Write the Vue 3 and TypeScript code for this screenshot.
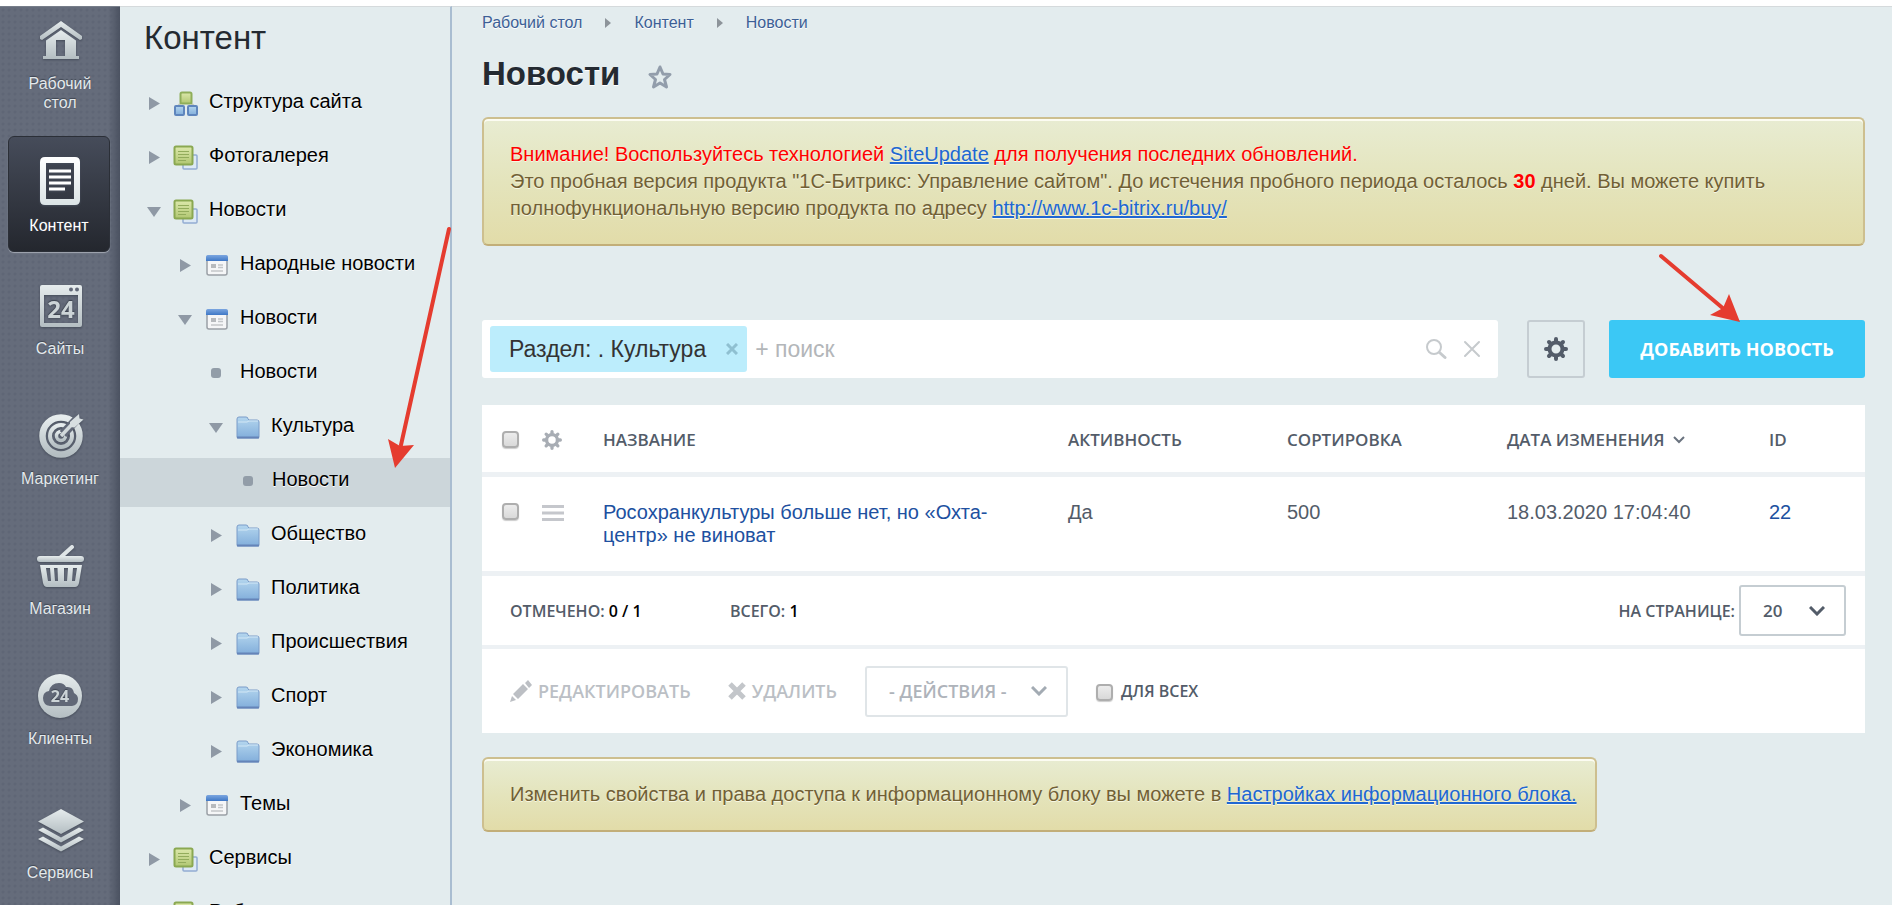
<script setup lang="ts">
import { ref } from 'vue'

type MenuIcon = 'home' | 'content' | 'sites' | 'marketing' | 'shop' | 'clients' | 'services'
interface MenuItem { icon: MenuIcon; label: string; active?: boolean }
type TreeIcon = 'structure' | 'block' | 'page' | 'folder' | 'dot'
interface TreeItem { label: string; level: number; icon: TreeIcon; open?: boolean; selected?: boolean }

const menu: MenuItem[] = [
  { icon: 'home', label: 'Рабочий стол' },
  { icon: 'content', label: 'Контент', active: true },
  { icon: 'sites', label: 'Сайты' },
  { icon: 'marketing', label: 'Маркетинг' },
  { icon: 'shop', label: 'Магазин' },
  { icon: 'clients', label: 'Клиенты' },
  { icon: 'services', label: 'Сервисы' },
]

const tree: TreeItem[] = [
  { label: 'Структура сайта', level: 0, icon: 'structure' },
  { label: 'Фотогалерея', level: 0, icon: 'block' },
  { label: 'Новости', level: 0, icon: 'block', open: true },
  { label: 'Народные новости', level: 1, icon: 'page' },
  { label: 'Новости', level: 1, icon: 'page', open: true },
  { label: 'Новости', level: 2, icon: 'dot' },
  { label: 'Культура', level: 2, icon: 'folder', open: true },
  { label: 'Новости', level: 3, icon: 'dot', selected: true },
  { label: 'Общество', level: 2, icon: 'folder' },
  { label: 'Политика', level: 2, icon: 'folder' },
  { label: 'Происшествия', level: 2, icon: 'folder' },
  { label: 'Спорт', level: 2, icon: 'folder' },
  { label: 'Экономика', level: 2, icon: 'folder' },
  { label: 'Темы', level: 1, icon: 'page' },
  { label: 'Сервисы', level: 0, icon: 'block' },
  { label: 'Работа', level: 0, icon: 'block' },
]

const crumbs = ['Рабочий стол', 'Контент', 'Новости']
const search = ref('')
const perPage = ref('20')
const action = ref('')
</script>

<template>
  <div class="page">
    <svg class="defs" width="0" height="0" aria-hidden="true">
      <defs>
        <linearGradient id="metal" x1="0" y1="0" x2="0" y2="1">
          <stop offset="0" stop-color="#e6eced" />
          <stop offset="1" stop-color="#b4bec2" />
        </linearGradient>
        <linearGradient id="white" x1="0" y1="0" x2="0" y2="1">
          <stop offset="0" stop-color="#ffffff" />
          <stop offset="1" stop-color="#dbe3e5" />
        </linearGradient>
        <linearGradient id="green" x1="0" y1="0" x2="0" y2="1">
          <stop offset="0" stop-color="#dce8ab" />
          <stop offset="1" stop-color="#b1c772" />
        </linearGradient>
        <linearGradient id="blue" x1="0" y1="0" x2="0" y2="1">
          <stop offset="0" stop-color="#b4d6ee" />
          <stop offset="1" stop-color="#82aedb" />
        </linearGradient>
        <linearGradient id="bluebar" x1="0" y1="0" x2="0" y2="1">
          <stop offset="0" stop-color="#7ba6e0" />
          <stop offset="1" stop-color="#3f78c6" />
        </linearGradient>
      </defs>
    </svg>

    <nav class="menu" aria-label="Разделы">
      <a v-for="m in menu" :key="m.icon" href="#" class="menu-item" :class="[{ active: m.active }, m.icon]">
        <svg v-if="m.icon === 'home'" class="menu-icon" viewBox="0 0 48 50">
          <path d="M25 5 4 20v3l2 1 19-13 19 13 2-1v-3z" fill="url(#metal)" />
          <path d="M25 14 10 24.500V40H7v3h36v-3h-3V24.500zM20 24h9v16h-9z" fill="url(#metal)" fill-rule="evenodd" />
        </svg>
        <svg v-else-if="m.icon === 'content'" class="menu-icon" viewBox="0 0 48 50">
          <path d="M10 1h30q5 0 5 5v38q0 5-5 5H10q-5 0-5-5V6q0-5 5-5zm1 6v36h28V7z" fill="url(#white)" fill-rule="evenodd" />
          <path d="M14 15h22M14 21h22M14 27h22M14 33h16" stroke="#fff" stroke-width="3" />
        </svg>
        <svg v-else-if="m.icon === 'sites'" class="menu-icon" viewBox="0 0 48 50">
          <path d="M6 4h38q2 0 2 2v38q0 2-2 2H6q-2 0-2-2V6q0-2 2-2zm2 10v28h34V14z" fill="url(#metal)" fill-rule="evenodd" />
          <circle cx="35" cy="8.500" r="2" fill="#616877" /><circle cx="41" cy="8.500" r="2" fill="#616877" />
          <text class="badge" x="25" y="37" text-anchor="middle" font-size="24" fill="#ccd4d7">24</text>
        </svg>
        <svg v-else-if="m.icon === 'marketing'" class="menu-icon" viewBox="0 0 48 50">
          <circle cx="25" cy="25" r="18.500" fill="none" stroke="url(#metal)" stroke-width="6.500" />
          <circle cx="25" cy="25" r="11" fill="none" stroke="url(#metal)" stroke-width="4" />
          <circle cx="25" cy="25" r="4.500" fill="none" stroke="url(#metal)" stroke-width="3.500" />
          <path d="m27 23 16-17" stroke="#616877" stroke-width="9" />
          <path d="m25 25 14-15" stroke="#d2d9db" stroke-width="3.500" />
          <path d="m34 11 9-8 .500 4.500 4 1-9 8-4.500-.500z" fill="#d8dfe1" />
        </svg>
        <svg v-else-if="m.icon === 'shop'" class="menu-icon" viewBox="0 0 48 50">
          <path d="m25 16 11-10" stroke="#dfe5e7" stroke-width="4" stroke-linecap="round" />
          <rect x="1" y="15" width="47" height="6" rx="3" fill="url(#metal)" />
          <path d="M4 24h42l-3 18q-1 4-4 4H11q-3 0-4-4zM10 27l2 13h3l-1-13zM18 27l1 13h3l-.500-13zM28 27v13h3l1-13zM37 27l-1 13h3l2-13z" fill="url(#metal)" fill-rule="evenodd" />
        </svg>
        <svg v-else-if="m.icon === 'clients'" class="menu-icon" viewBox="0 0 48 50">
          <circle cx="24" cy="25" r="22" fill="url(#metal)" />
          <path d="M14 35q-7-1-7-8 0-6 6-7 2-8 10-8 5 0 7 4 7-1 8 6 4 2 4 6 0 6-6 7z" fill="#616877" />
          <text class="badge" x="24" y="31" text-anchor="middle" font-size="16" fill="#ccd4d7">24</text>
        </svg>
        <svg v-else class="menu-icon" viewBox="0 0 48 50">
          <path d="m25 4 23 12.500L25 29 2 16.500z" fill="url(#metal)" />
          <path d="m2 25 5-2.500 18 10 18-10 5 2.500-23 12.500z" fill="url(#metal)" />
          <path d="m2 34 5-2.500 18 10 18-10 5 2.500-23 12.500z" fill="url(#metal)" />
        </svg>
        <span class="menu-label">{{ m.label }}</span>
      </a>
    </nav>

    <aside class="sidebar">
      <h2 class="side-title">Контент</h2>
      <ul class="tree">
        <li v-for="(t, i) in tree" :key="i" class="tree-row" :class="['level-' + t.level, { selected: t.selected }]">
          <button v-if="t.icon !== 'dot'" type="button" class="toggle" :aria-label="t.open ? 'Свернуть' : 'Развернуть'">
            <svg viewBox="0 0 14 14" width="14" height="14">
              <path v-if="t.open" d="M0 2h14L7 12z" fill="#8f99a5" />
              <path v-else d="M2 0v13l11-6.500z" fill="#8f99a5" />
            </svg>
          </button>
          <span v-else class="dot"></span>
          <svg v-if="t.icon === 'structure'" class="tree-icon" viewBox="0 0 26 26">
            <path d="M9 11 5 15M17 11l4 4" stroke="#c3c9b8" stroke-width="2" />
            <rect x="7.500" y="1.500" width="11" height="11" rx="1.500" fill="url(#green)" stroke="#8fae5a" stroke-width="2" />
            <rect x="2" y="15" width="9" height="9" rx="1" fill="url(#blue)" stroke="#5f86bd" stroke-width="2" />
            <rect x="15" y="15" width="9" height="9" rx="1" fill="url(#blue)" stroke="#5f86bd" stroke-width="2" />
          </svg>
          <svg v-else-if="t.icon === 'block'" class="tree-icon" viewBox="0 0 26 26">
            <rect x="10" y="10" width="14" height="14" rx="1" fill="#dce9f5" stroke="#93acd2" stroke-width="1.500" />
            <rect x="1.500" y="1.500" width="18" height="18" rx="1.500" fill="url(#green)" stroke="#8aa851" stroke-width="2" />
            <path d="M5 6.500h11M5 9.500h11M5 12.500h11M5 15.500h8" stroke="#93ac5c" />
          </svg>
          <svg v-else-if="t.icon === 'page'" class="tree-icon" viewBox="0 0 26 26">
            <rect x="3" y="3" width="20" height="19" rx="2" fill="#f5f6f7" stroke="#9ba0a6" stroke-width="1.500" />
            <path d="M2 8V4q0-2 2-2h18q2 0 2 2v4z" fill="url(#bluebar)" />
            <path d="M7 11h5v4H7z" fill="#b7babd" /><path d="M14 12h5M14 14.500h5M7 18h12" stroke="#c3c6c9" stroke-width="1.500" />
          </svg>
          <svg v-else-if="t.icon === 'folder'" class="tree-icon" viewBox="0 0 26 26">
            <path d="M2 22V4q0-2 2-2h7q2 0 2 2l1 1h8q2 0 2 2v15q0 1-1 1H3q-1 0-1-1z" fill="url(#blue)" stroke="#7b9cc9" />
            <path d="M3 7h9l2-1h9" fill="none" stroke="#d3e8f6" /><path d="M2 22.500h22" stroke="#6584b8" stroke-width="2" />
          </svg>
          <a href="#" class="tree-label">{{ t.label }}</a>
        </li>
      </ul>
    </aside>

    <main class="main">
      <nav class="crumbs" aria-label="Навигация">
        <template v-for="(c, i) in crumbs" :key="c">
          <span v-if="i" class="crumb-sep"></span>
          <a href="#">{{ c }}</a>
        </template>
      </nav>
      <div class="heading">
        <h1>Новости</h1>
        <button type="button" class="star" aria-label="В избранное">
          <svg viewBox="0 0 26 26" width="26" height="26"><path d="m13 3 3 7 7 .500-5.500 5 2 7.500L13 19l-6.500 4 2-7.500-5.500-5 7-.500z" fill="none" stroke="#929dab" stroke-width="3" stroke-linejoin="round" /></svg>
        </button>
      </div>

      <section class="notice">
        <p class="alert">Внимание! Воспользуйтесь технологией <a href="#">SiteUpdate</a> для получения последних обновлений.</p>
        <p>Это пробная версия продукта "1С-Битрикс: Управление сайтом". До истечения пробного периода осталось <b>30</b> дней. Вы можете купить полнофункциональную версию продукта по адресу <a href="#">http://www.1c-bitrix.ru/buy/</a></p>
      </section>

      <div class="toolbar">
        <div class="filter">
          <span class="chip">Раздел: . Культура
            <button type="button" class="chip-x" aria-label="Удалить фильтр"><svg viewBox="0 0 12 12" width="12" height="12"><path d="m1 1 10 10M11 1 1 11" stroke="#8fc0d1" stroke-width="3" /></svg></button>
          </span>
          <input v-model="search" type="text" placeholder="+ поиск" aria-label="Поиск" />
          <button type="button" class="plain" aria-label="Найти"><svg viewBox="0 0 22 22" width="22" height="22"><circle cx="9" cy="9" r="7" fill="none" stroke="#c6cacd" stroke-width="2" /><path d="m14.500 14.500 5.500 5" stroke="#c6cacd" stroke-width="3" stroke-linecap="round" /></svg></button>
          <button type="button" class="plain" aria-label="Очистить"><svg viewBox="0 0 18 18" width="18" height="18"><path d="m2 2 14 14M16 2 2 16" stroke="#c6cacd" stroke-width="2" stroke-linecap="round" /></svg></button>
        </div>
        <button type="button" class="settings" aria-label="Настройки">
          <svg viewBox="0 0 24 24" width="24" height="24"><circle cx="12" cy="12" r="6.500" fill="none" stroke="#535c69" stroke-width="4" /><path d="M12 2v3M12 19v3M2 12h3M19 12h3M5 5l2 2M17 17l2 2M19 5l-2 2M7 17l-2 2" stroke="#535c69" stroke-width="4" stroke-linecap="round" /></svg>
        </button>
        <button type="button" class="add">Добавить новость</button>
      </div>

      <section class="grid">
        <table>
          <colgroup><col class="c-check" /><col class="c-act" /><col class="c-name" /><col class="c-active" /><col class="c-sort" /><col class="c-date" /><col class="c-id" /></colgroup>
          <thead>
            <tr>
              <th><input type="checkbox" aria-label="Выбрать все" /></th>
              <th><button type="button" class="plain" aria-label="Настройка колонок"><svg viewBox="0 0 24 24" width="20" height="20"><circle cx="12" cy="12" r="6.500" fill="none" stroke="#a8adb4" stroke-width="4" /><path d="M12 2v3M12 19v3M2 12h3M19 12h3M5 5l2 2M17 17l2 2M19 5l-2 2M7 17l-2 2" stroke="#a8adb4" stroke-width="4" stroke-linecap="round" /></svg></button></th>
              <th>Название</th>
              <th>Активность</th>
              <th>Сортировка</th>
              <th>Дата изменения <svg class="sort" viewBox="0 0 12 8" width="12" height="8"><path d="m1 1 5 5 5-5" fill="none" stroke="#6a737f" stroke-width="2" /></svg></th>
              <th>ID</th>
            </tr>
          </thead>
          <tbody>
            <tr>
              <td><input type="checkbox" aria-label="Выбрать строку" /></td>
              <td><button type="button" class="plain" aria-label="Действия"><svg viewBox="0 0 22 16" width="22" height="16"><path d="M0 1.500h22M0 8h22M0 14.500h22" stroke="#c5c7cc" stroke-width="3" /></svg></button></td>
              <td><a href="#">Росохранкультуры больше нет, но «Охта-центр» не виноват</a></td>
              <td>Да</td>
              <td>500</td>
              <td>18.03.2020 17:04:40</td>
              <td><a href="#">22</a></td>
            </tr>
          </tbody>
        </table>
        <div class="summary">
          <span class="marked">Отмечено: <b>0 / 1</b></span>
          <span>Всего: <b>1</b></span>
          <label class="per-page" for="per-page">На странице:</label>
          <span class="select">
            <select id="per-page" v-model="perPage"><option>20</option><option>50</option></select>
            <svg viewBox="0 0 16 10" width="16" height="10"><path d="m1 1 7 7 7-7" fill="none" stroke="#535c69" stroke-width="3" /></svg>
          </span>
        </div>
        <div class="actions">
          <button type="button" class="act edit"><svg viewBox="0 0 22 22" width="22" height="22"><path d="m0 22 2-6 4 4zM3 14 13 4l5 5L8 19zM15 3l3-3 4 5-3 3z" fill="#bcbfc4" /></svg>Редактировать</button>
          <button type="button" class="act"><svg viewBox="0 0 18 18" width="18" height="18"><path d="m2 2 14 14M16 2 2 16" stroke="#c3c6ca" stroke-width="5" /></svg>Удалить</button>
          <span class="select muted">
            <select v-model="action" aria-label="Действия"><option value="">- Действия -</option></select>
            <svg viewBox="0 0 16 10" width="16" height="10"><path d="m1 1 7 7 7-7" fill="none" stroke="#a3abb3" stroke-width="3" /></svg>
          </span>
          <label class="for-all"><input type="checkbox" />Для всех</label>
        </div>
      </section>

      <section class="notice small">
        <p>Изменить свойства и права доступа к информационному блоку вы можете в <a href="#">Настройках информационного блока.</a></p>
      </section>
    </main>

    <svg class="pointer long" viewBox="0 0 80 250" width="80" height="250" aria-hidden="true">
      <path d="M69 9 21 225" stroke="#e53c2f" stroke-width="4" stroke-linecap="round" /><path d="m15 248-7-29 12 7 14-1z" fill="#e53c2f" />
    </svg>
    <svg class="pointer short" viewBox="0 0 90 80" width="90" height="80" aria-hidden="true">
      <path d="m6 6 64 54" stroke="#e53c2f" stroke-width="4" stroke-linecap="round" /><path d="m85 72-30-7 13-7 6-14z" fill="#e53c2f" />
    </svg>
  </div>
</template>

<style>
html, body { margin: 0; height: 100%; overflow: hidden; background: #fff; }
#app { height: 100%; }
</style>

<style scoped>
* { box-sizing: border-box; }
.page { position: relative; display: flex; height: 100%; padding-top: 6px; overflow: hidden; font-family: "Liberation Sans", Arial, sans-serif; background: #fff; }
.defs { position: absolute; }
button { padding: 0; border: 0; background: none; font: inherit; color: inherit; cursor: pointer; }
a { color: inherit; text-decoration: none; }
h1, h2, p, ul { margin: 0; padding: 0; }
ul { list-style: none; }
svg { display: block; }

.menu { flex: none; width: 120px; border-top: 1px solid #777e8a; background: linear-gradient(90deg, transparent 90%, #4b5261), radial-gradient(#5f6676 1px, transparent 2px) 0 0 / 6px 6px, #656c7b; }
.menu-item { display: flex; flex-direction: column; align-items: center; height: 130px; padding-top: 19px; color: #e4e9ec; font-size: 16px; line-height: 19px; text-align: center; text-shadow: 0 -1px 1px #3d4450; }
.menu-item.home { height: 129px; padding-top: 9px; }
.menu-item.services { margin-top: 4px; }
.menu-icon { flex: none; width: 48px; height: 50px; filter: drop-shadow(0 1px 1px #454c59); }
.badge { font-family: "Open Sans", sans-serif; font-weight: 700; }
.menu-label { width: 80px; margin-top: 8px; display: flex; justify-content: center; }
.menu-item.active { width: 102px; height: 116px; margin: 0 8px 10px; padding-top: 19px; border: 1px solid #2b2f37; border-radius: 6px; background: linear-gradient(#464c5a, #24272e); box-shadow: 0 1px 1px #a2a8b2; color: #fff; }
.menu-item.active .menu-label { margin-top: 10px; }

.sidebar { flex: none; width: 332px; border-top: 1px solid #d5dadc; border-right: 2px solid #a9bdd1; background: #e3ecee; overflow: hidden; }
.side-title { padding: 11px 24px 0; height: 73px; font-size: 33px; line-height: 40px; font-weight: 400; color: #242a31; }
.tree-row { display: flex; align-items: center; height: 49px; margin-bottom: 5px; padding: 0 0 8px 27px; font-size: 20px; line-height: 24px; }
.tree-row.level-1 { padding-left: 58px; }
.tree-row.level-2 { padding-left: 89px; }
.tree-row.level-3 { padding-left: 121px; }
.tree-row.selected { background: #ccd6da; }
.tree-label { color: #000; text-shadow: 0 1px 0 #fff; white-space: nowrap; }
.toggle { width: 14px; height: 14px; margin: 6px 12px 0 0; }
.dot { width: 10px; height: 10px; margin: 4px 19px 0 2px; border-radius: 3px; background: #929da8; }
.tree-icon { width: 26px; height: 26px; margin: 6px 10px 0 0; }

.main { flex: 1; min-width: 0; padding: 3px 27px 0 30px; border-top: 1px solid #d5dadc; background: #e3ecee; }
.crumbs { display: flex; align-items: center; gap: 23px; height: 26px; font-size: 16px; color: #3c5f96; text-shadow: 0 1px 0 #fff; }
.crumb-sep { border: 5px solid transparent; border-left: 6px solid #8d949a; border-right: 0; }
.heading { display: flex; align-items: center; gap: 27px; height: 40px; margin: 18px 0 23px; }
h1 { font-size: 33px; line-height: 40px; font-weight: 700; color: #242a31; text-shadow: 0 1px 0 #fff; }
.star { margin-top: 5px; }
.notice { padding: 22px 26px 22px; border: 2px solid #cdbf8f; border-bottom-color: #c2ae78; border-radius: 6px; background: linear-gradient(#e8ecd2, #e4e4bc 50%, #e2dca9); box-shadow: inset 0 2px 0 #fcfcf2; color: #716035; font-size: 20px; line-height: 27px; text-shadow: 0 1px 0 #f8f8e4; }
.notice a { color: #2067d2; text-decoration: underline; }
.notice .alert, .notice b { color: #f00; }
.notice.small { width: fit-content; margin-top: 24px; padding-right: 18px; }

.toolbar { display: flex; height: 58px; margin: 74px 0 27px; }
.filter { display: flex; flex: 1; min-width: 0; align-items: center; gap: 16px; padding: 0 17px 0 8px; border-radius: 3px; background: #fff; }
.chip { display: flex; align-items: center; gap: 20px; height: 46px; padding: 0 9px 0 19px; border-radius: 3px; background: #bcedfc; color: #333; font-size: 23px; line-height: 44px; white-space: nowrap; }
.filter input { flex: 1; min-width: 0; margin-left: -8px; padding: 0; border: 0; outline: 0; background: none; font: 23px "Liberation Sans", Arial, sans-serif; }
.filter input::placeholder { color: #b3b6b9; opacity: 1; }
.settings { display: grid; place-items: center; width: 58px; margin: 0 24px 0 29px; border: 2px solid #c5cdd2; border-radius: 3px; }
.add { width: 256px; border-radius: 3px; background: #3bc8f5; color: #fff; font: 700 18px "Open Sans", sans-serif; text-transform: uppercase; }

.grid { background: #fff; color: #535c69; font-family: "Open Sans", sans-serif; }
table { width: 100%; table-layout: fixed; border-collapse: separate; border-spacing: 0; }
.c-check { width: 60px; }
.c-act { width: 61px; }
.c-active { width: 219px; }
.c-sort { width: 220px; }
.c-date { width: 262px; }
.c-id { width: 96px; }
th, td { padding: 0; text-align: left; border-bottom: 5px solid #edf1f4; }
th { height: 72px; padding-top: 2px; font-size: 17px; font-weight: 600; text-transform: uppercase; white-space: nowrap; }
th .plain { display: block; }
td { height: 99px; padding-top: 24px; vertical-align: top; font: 20px/23px "Liberation Sans", Arial, sans-serif; }
td:nth-child(3) { padding-right: 80px; }
td a { color: #2050a0; }
th:first-child, td:first-child { padding-left: 20px; }
td .plain { margin-top: 4px; }
.sort { display: inline-block; margin: 0 0 2px 4px; }
input[type="checkbox"] { appearance: none; display: block; width: 17px; height: 17px; margin: 2px 0 0; border: 2px solid #aeaeae; border-radius: 4px; background: linear-gradient(#ececec, #d9d9d9); box-shadow: 0 1px 1px #ccc; }
th input[type="checkbox"] { margin: 0; }
.summary, .actions { display: flex; align-items: center; font-size: 16px; font-weight: 600; text-transform: uppercase; white-space: nowrap; }
.summary { height: 73px; padding: 0 19px 0 28px; border-bottom: 4px solid #edf1f4; }
.summary b { color: #000; font-weight: 600; }
.marked { width: 220px; }
.per-page { margin: 0 4px 0 auto; }
.select { display: grid; width: 107px; height: 51px; align-items: center; }
.select select { grid-area: 1 / 1; appearance: none; width: 100%; height: 100%; padding: 0 22px; border: 2px solid #c5cdd2; border-radius: 3px; background: none; color: #535c69; font: 600 17px "Open Sans", sans-serif; text-transform: uppercase; }
.select svg { grid-area: 1 / 1; justify-self: end; margin-right: 21px; pointer-events: none; }
.actions { height: 84px; padding: 0 28px; font-size: 18px; }
.act { display: flex; align-items: center; gap: 6px; color: #bbbfc5; text-transform: uppercase; }
.act.edit { margin-right: 37px; }
.select.muted { width: 203px; margin: 0 28px; }
.select.muted select { border-color: #e0e5e8; color: #aeb3ba; font-size: 18px; }
.for-all { display: flex; align-items: center; gap: 8px; font-size: 16px; }

.pointer { position: absolute; pointer-events: none; }
.pointer.long { left: 380px; top: 220px; }
.pointer.short { right: 147px; top: 250px; }
</style>
